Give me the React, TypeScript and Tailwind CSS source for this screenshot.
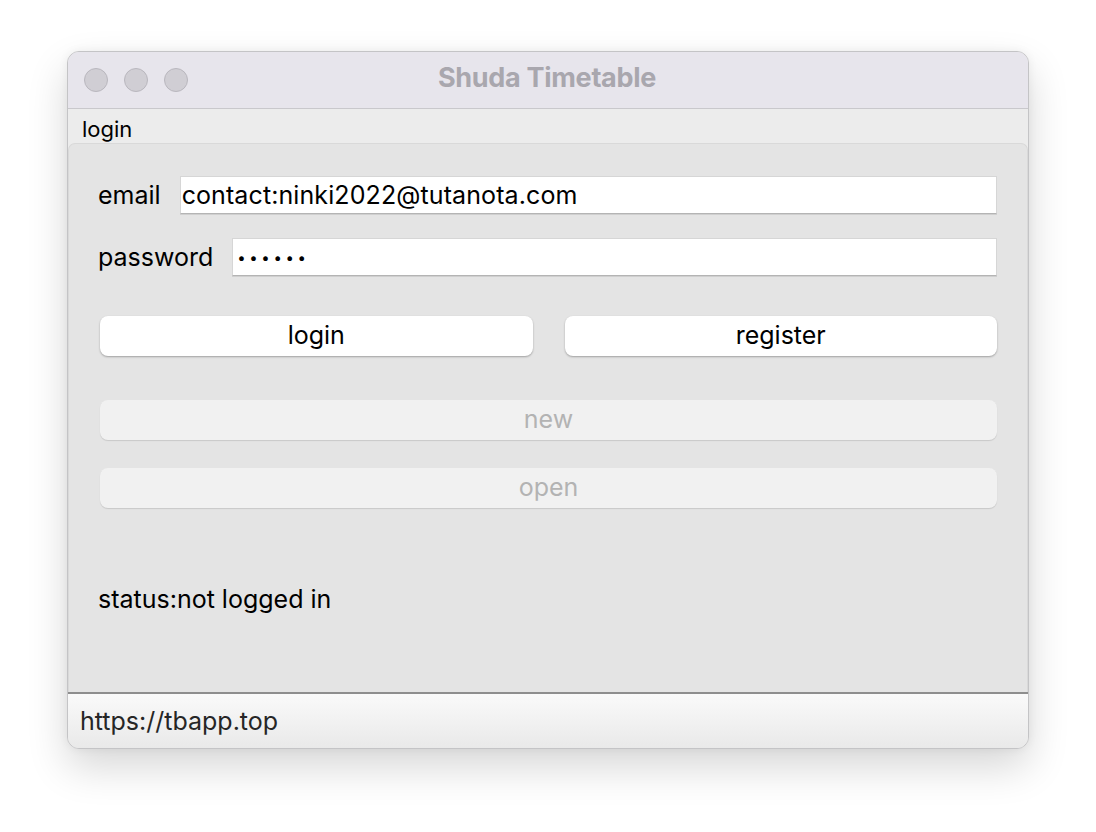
import React from "react";

const font = { fontFamily: "Inter, 'Noto Sans', 'Liberation Sans', sans-serif" };

function TrafficLight() {
    return <span className="block h-[24px] w-[24px] rounded-full border border-[#b9b7be] bg-[#d0ced4]" />;
}

function Field({ label, children }: { label: string; children: React.ReactNode }) {
    return (
        <div className="flex items-center h-[38px]">
            <span className="text-[25px] text-black pr-[19px] leading-none">{label}</span>
            <div className="flex-1 h-[38px] flex items-center bg-white border border-[#d6d6d6] border-b-[#b4b4b4] shadow-[0_1px_0_#cfcfcf] px-[1px] text-[25px] text-black leading-none tracking-[0.1px]">
                {children}
            </div>
        </div>
    );
}

export default function App() {
    return (
        <div className="min-h-[832px] w-[1096px] bg-white pt-[51px] pl-[67px]" style={font}>
            {/* Window */}
            <div className="w-[962px] h-[698px] flex flex-col rounded-[12px] border border-[#c4c4c6] bg-[#ececec] overflow-hidden shadow-[0_18px_40px_rgba(0,0,0,0.16),0_0_10px_rgba(0,0,0,0.06)]">
                {/* Title bar */}
                <div className="relative h-[57px] shrink-0 flex items-center bg-[#e7e5ec] border-b border-[#c9c8cc] px-[16px]">
                    <div className="flex gap-[16px]">
                        <TrafficLight />
                        <TrafficLight />
                        <TrafficLight />
                    </div>
                    <div className="absolute inset-0 flex items-center justify-center pb-[4px] pr-[2px]">
                        <span className="text-[27px] font-bold text-[#a9a7ae] tracking-[-0.3px]">Shuda Timetable</span>
                    </div>
                </div>

                {/* Menu bar */}
                <div className="h-[34px] shrink-0 flex items-center px-[14px] pt-[6px] bg-[#ececec]">
                    <span className="text-[22px] text-black leading-none">login</span>
                </div>

                {/* Content panel */}
                <div className="flex-1 flex flex-col rounded-t-[7px] border border-b-0 border-[#d9d9d9] bg-[#e4e4e4] pl-[29px] pr-[30px] pt-[32px]">
                    <div className="flex flex-col gap-[24px]">
                        <Field label="email">contact:ninki2022@tutanota.com</Field>
                        <Field label="password">
                            <span className="text-[15px] tracking-[3.6px] pl-[3px]">••••••</span>
                        </Field>
                    </div>

                    <div className="flex gap-[32px] pl-[2px] mt-[40px]">
                        <button className="flex-1 h-[40px] rounded-[8px] bg-white shadow-[0_1px_2px_rgba(0,0,0,0.3)] text-[25px] text-black">
                            login
                        </button>
                        <button className="flex-1 h-[40px] rounded-[8px] bg-white shadow-[0_1px_2px_rgba(0,0,0,0.3)] text-[25px] text-black">
                            register
                        </button>
                    </div>

                    <div className="flex flex-col gap-[28px] pl-[2px] mt-[44px]">
                        <button className="h-[40px] rounded-[8px] bg-[#f1f1f1] shadow-[0_1px_1px_rgba(0,0,0,0.12)] text-[25px] text-[#b3b3b3]">
                            new
                        </button>
                        <button className="h-[40px] rounded-[8px] bg-[#f1f1f1] shadow-[0_1px_1px_rgba(0,0,0,0.12)] text-[25px] text-[#b3b3b3]">
                            open
                        </button>
                    </div>

                    <div className="mt-[79px] text-[25px] text-black leading-none">status:not logged in</div>
                </div>

                {/* Status bar */}
                <div className="h-[56px] shrink-0 flex items-center px-[12px] border-t-2 border-[#8e8e8e] bg-gradient-to-b from-[#fafafa] to-[#e9e9e9]">
                    <span className="text-[25px] text-[#262626] leading-none">https://tbapp.top</span>
                </div>
            </div>
        </div>
    );
}
